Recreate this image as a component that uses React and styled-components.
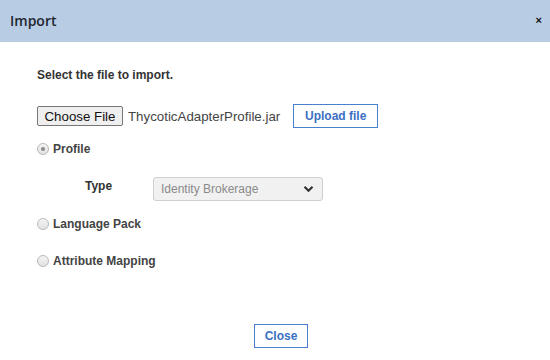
import React from 'react';
import styled, { createGlobalStyle } from 'styled-components';

const Global = createGlobalStyle`
  html, body {
    margin: 0;
    padding: 0;
    background: #ffffff;
  }
  body {
    font-family: 'Liberation Sans', Arial, sans-serif;
  }
`;

const Dialog = styled.div`
  width: 550px;
  height: 360px;
  display: flex;
  flex-direction: column;
  background: #ffffff;
`;

const Header = styled.div`
  height: 42px;
  background: #b8cce4;
  display: flex;
  align-items: center;
  justify-content: space-between;
  padding: 0 8px 0 10px;
  box-sizing: border-box;
`;

const Title = styled.div`
  font-family: 'Open Sans', 'Noto Sans', sans-serif;
  font-size: 14px;
  font-weight: 600;
  color: #1e2630;
  margin-top: -1px;
`;

const CloseX = styled.span`
  font-family: 'Liberation Sans', Arial, sans-serif;
  font-size: 11px;
  font-weight: 700;
  color: #111;
  margin-top: -2px;
`;

const Body = styled.div`
  flex: 1;
  padding: 25px 37px 0;
  display: flex;
  flex-direction: column;
`;

const Lead = styled.div`
  font-size: 12px;
  font-weight: 700;
  color: #333;
  line-height: 16px;
`;

const FileRow = styled.div`
  display: flex;
  align-items: center;
  margin-top: 21px;
  height: 24px;
`;

const ChooseButton = styled.div`
  box-sizing: border-box;
  width: 86px;
  height: 20px;
  border: 1px solid #767676;
  border-radius: 2px;
  background: #efefef;
  font-size: 13.3px;
  color: #111;
  display: flex;
  align-items: center;
  justify-content: center;
`;

const FileName = styled.span`
  font-size: 13.3px;
  color: #444;
  margin-left: 5px;
  width: 165px;
`;

const OutlineButton = styled.div`
  box-sizing: border-box;
  height: ${p => p.$h}px;
  padding: 0 ${p => p.$px}px;
  border: 1px solid #4a7fcc;
  color: #3b70c2;
  font-size: 12px;
  font-weight: 700;
  display: inline-flex;
  align-items: center;
  justify-content: center;
  background: #fff;
`;

const RadioRow = styled.div`
  display: flex;
  align-items: center;
  margin-top: ${p => p.$mt}px;
  height: 16px;
`;

const Radio = styled.span`
  box-sizing: border-box;
  width: 12px;
  height: 12px;
  border-radius: 50%;
  border: 1px solid #b9b9b9;
  background: linear-gradient(#f4f4f4, #e2e2e2);
  display: inline-flex;
  align-items: center;
  justify-content: center;
  margin-right: 4px;
  &:after {
    content: '';
    width: 4px;
    height: 4px;
    border-radius: 50%;
    background: ${p => (p.$checked ? '#8a8a8a' : 'transparent')};
  }
`;

const RadioLabel = styled.span`
  font-size: 12px;
  font-weight: 700;
  color: #444;
`;

const TypeRow = styled.div`
  display: flex;
  align-items: center;
  margin-top: 20px;
  padding-left: 48px;
`;

const TypeLabel = styled.span`
  font-size: 12px;
  font-weight: 700;
  color: #333;
  width: 68px;
  margin-top: -6px;
`;

const Select = styled.div`
  box-sizing: border-box;
  width: 170px;
  height: 24px;
  border: 1px solid #cfcfcf;
  border-radius: 3px;
  background: #f1f1f1;
  display: flex;
  align-items: center;
  justify-content: space-between;
  padding: 0 8px 0 7px;
  font-size: 12px;
  color: #8a8a8a;
`;

const Footer = styled.div`
  display: flex;
  justify-content: center;
  padding-top: 55px;
  padding-left: 12px;
`;

const Chevron = () => (
  <svg width="11" height="8" viewBox="0 0 11 8">
    <path d="M1.5 1.8 L5.5 5.8 L9.5 1.8" fill="none" stroke="#333" strokeWidth="2.2" />
  </svg>
);

export default function App() {
  return (
    <Dialog>
      <Global />
      <Header>
        <Title>Import</Title>
        <CloseX>×</CloseX>
      </Header>
      <Body>
        <Lead>Select the file to import.</Lead>
        <FileRow>
          <ChooseButton>Choose File</ChooseButton>
          <FileName>ThycoticAdapterProfile.jar</FileName>
          <OutlineButton $h={24} $px={11}>Upload file</OutlineButton>
        </FileRow>
        <RadioRow $mt={13}>
          <Radio $checked />
          <RadioLabel>Profile</RadioLabel>
        </RadioRow>
        <TypeRow>
          <TypeLabel>Type</TypeLabel>
          <Select>
            <span>Identity Brokerage</span>
            <Chevron />
          </Select>
        </TypeRow>
        <RadioRow $mt={15}>
          <Radio />
          <RadioLabel>Language Pack</RadioLabel>
        </RadioRow>
        <RadioRow $mt={21}>
          <Radio />
          <RadioLabel>Attribute Mapping</RadioLabel>
        </RadioRow>
        <Footer>
          <OutlineButton $h={24} $px={10}>Close</OutlineButton>
        </Footer>
      </Body>
    </Dialog>
  );
}
